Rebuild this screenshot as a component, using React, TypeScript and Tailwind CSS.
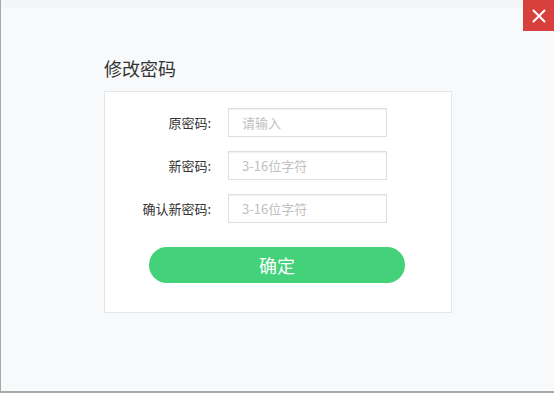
import React from "react";

export default function App() {
  const rows = [
    { label: "原密码:", ph: "请输入" },
    { label: "新密码:", ph: "3-16位字符" },
    { label: "确认新密码:", ph: "3-16位字符" },
  ];
  return (
    <div
      className="relative w-[554px] h-[393px] bg-[#f7f9fa] border-l border-b-2 border-[#a8a8a8] overflow-hidden"
      style={{ fontFamily: '"Noto Sans CJK SC", "Noto Sans", sans-serif' }}
    >
      <div className="h-[8px] bg-[#f3f6f7]" />
      <button className="absolute top-0 right-0 w-[31px] h-[31px] bg-[#d8403e] flex items-center justify-center">
        <svg width="14" height="14" viewBox="0 0 14 14">
          <path d="M1.5 1.5 L12.5 12.5 M12.5 1.5 L1.5 12.5" stroke="white" strokeWidth="2" strokeLinecap="round" />
        </svg>
      </button>
      <div className="ml-[103px] mt-[48px] w-[348px]">
        <div className="text-[18px] leading-[24px] text-[#333] mb-[11px]">修改密码</div>
        <div className="bg-white border border-[#e3e6e8] h-[222px] pt-[16px]">
          <div className="flex flex-col gap-[14px]">
            {rows.map((r) => (
              <div key={r.label} className="flex items-center h-[29px]">
                <div className="w-[106px] text-right text-[13px] text-[#333]">{r.label}</div>
                <input
                  className="ml-[17px] w-[159px] h-[29px] border border-[#dcdfe2] shadow-[inset_0_1px_1px_rgba(0,0,0,0.06)] px-[13px] text-[13px] text-[#333] placeholder:text-[#c0c0c0] outline-none"
                  placeholder={r.ph}
                />
              </div>
            ))}
          </div>
          <button className="mt-[24px] ml-[44px] w-[256px] h-[36px] rounded-full bg-[#43d17a] text-white text-[18px] flex items-center justify-center">
            确定
          </button>
        </div>
      </div>
    </div>
  );
}
